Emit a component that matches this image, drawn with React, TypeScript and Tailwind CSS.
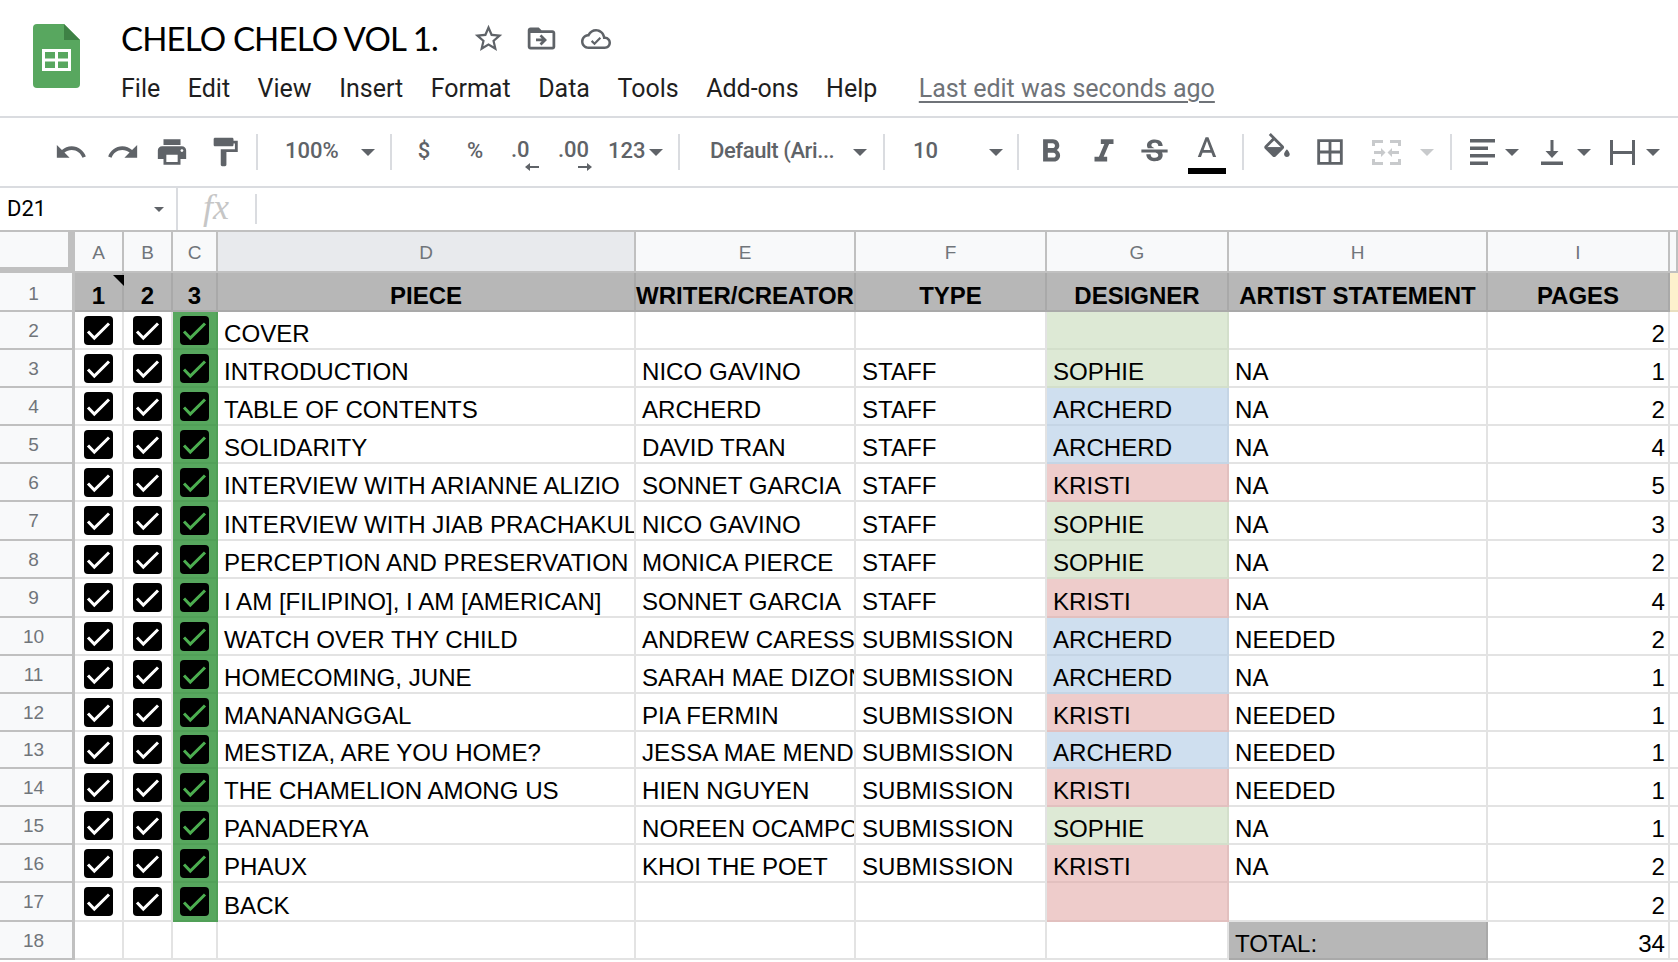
import React from 'react';

const paths = {
  undo: 'M12.5 8c-2.65 0-5.05.99-6.9 2.6L2 7v9h9l-3.62-3.62c1.39-1.16 3.16-1.88 5.12-1.88 3.54 0 6.55 2.31 7.6 5.5l2.37-.78C21.08 11.03 17.15 8 12.5 8z',
  redo: 'M18.4 10.6C16.55 8.99 14.15 8 11.5 8c-4.65 0-8.58 3.03-9.96 7.22L3.9 16c1.05-3.19 4.05-5.5 7.6-5.5 1.95 0 3.73.72 5.12 1.88L13 16h9V7l-3.6 3.6z',
  print: 'M19 8H5c-1.66 0-3 1.34-3 3v6h4v4h12v-4h4v-6c0-1.66-1.34-3-3-3zm-3 11H8v-5h8v5zm3-7c-.55 0-1-.45-1-1s.45-1 1-1 1 .45 1 1-.45 1-1 1zm-1-9H6v4h12V3z',
  paint: 'M18 4V3c0-.55-.45-1-1-1H5c-.55 0-1 .45-1 1v4c0 .55.45 1 1 1h12c.55 0 1-.45 1-1V6h1v4H9v11c0 .55.45 1 1 1h2c.55 0 1-.45 1-1v-9h8V4h-3z',
  bold: 'M15.6 10.79c.97-.67 1.65-1.77 1.65-2.79 0-2.26-1.75-4-4-4H7v14h7.04c2.09 0 3.71-1.7 3.71-3.79 0-1.52-.86-2.82-2.15-3.42zM10 6.5h3c.83 0 1.5.67 1.5 1.5s-.67 1.5-1.5 1.5h-3v-3zm3.5 9H10v-3h3.5c.83 0 1.5.67 1.5 1.5s-.67 1.5-1.5 1.5z',
  italic: 'M10 4v3h2.21l-3.42 8H6v3h8v-3h-2.21l3.42-8H18V4z',
  strike: 'M6.85 7.08C6.85 4.37 9.45 3 12.24 3c1.64 0 3 .49 3.9 1.28.77.65 1.46 1.73 1.46 3.24h-3.01c0-.31-.05-.59-.15-.85-.29-.86-1.2-1.28-2.25-1.28-1.86 0-2.34 1.02-2.34 1.7 0 .48.25.88.74 1.21.38.25.77.48 1.41.7H7.39c-.21-.34-.54-.89-.54-1.92zM21 12v-2H3v2h9.62c1.15.45 1.96.75 1.96 1.97 0 1-.81 1.67-2.28 1.67-1.54 0-2.93-.54-2.93-2.51H6.4c0 .55.08 1.13.24 1.58.81 2.29 3.29 3.3 5.67 3.3 2.27 0 5.3-.89 5.3-4.05 0-.3-.01-1.16-.48-1.96H21z',
  textA: 'M11 3L5.5 17h2.25l1.12-3h6.25l1.12 3h2.25L13 3h-2zm-1.38 9L12 5.67 14.38 12H9.62z',
  fill: 'M16.56 8.94L7.62 0 6.21 1.41l2.38 2.38-5.15 5.15c-.59.59-.59 1.54 0 2.12l5.5 5.5c.29.29.68.44 1.06.44s.77-.15 1.06-.44l5.5-5.5c.59-.58.59-1.53 0-2.12zM5.21 10L10 5.21 14.79 10H5.21zM19 11.5s-2 2.17-2 3.5c0 1.1.9 2 2 2s2-.9 2-2c0-1.33-2-3.5-2-3.5z',
  borders: 'M3 3v18h18V3H3zm8 16H5v-6h6v6zm0-8H5V5h6v6zm8 8h-6v-6h6v6zm0-8h-6V5h6v6z',
  star: 'M22 9.24l-7.19-.62L12 2 9.19 8.63 2 9.24l5.46 4.73L5.82 21 12 17.27 18.18 21l-1.63-7.03L22 9.24zM12 15.4l-3.76 2.27 1-4.28-3.32-2.88 4.38-.38L12 6.1l1.71 4.04 4.38.38-3.32 2.88 1 4.28L12 15.4z',
  folder: 'M20 6h-8l-2-2H4c-1.1 0-2 .9-2 2v12c0 1.1.9 2 2 2h16c1.1 0 2-.9 2-2V8c0-1.1-.9-2-2-2zm0 12H4V8h16v10zm-8.01-9l-1.41 1.41L12.16 12H8v2h4.16l-1.59 1.59L11.99 17 16 13.01 11.99 9z',
  cloud: 'M19.35 10.04C18.67 6.59 15.64 4 12 4 9.11 4 6.6 5.64 5.35 8.04 2.34 8.36 0 10.91 0 14c0 3.31 2.69 6 6 6h13c2.76 0 5-2.24 5-5 0-2.64-2.05-4.78-4.65-4.96zM19 18H6c-2.21 0-4-1.79-4-4 0-2.05 1.53-3.76 3.56-3.97l1.07-.11.5-.95C8.08 7.14 9.94 6 12 6c2.62 0 4.88 1.86 5.39 4.43l.3 1.5 1.53.11c1.56.1 2.78 1.41 2.78 2.96 0 1.65-1.35 3-3 3z',
};

const Icon = ({ d, className }: { d: string; className: string }) => (
  <svg viewBox="0 0 24 24" fill="currentColor" className={`shrink-0 text-[#5f6368] ${className}`}>
    <path d={d} />
  </svg>
);

const Caret = ({ className }: { className: string }) => (
  <svg viewBox="0 0 14 7" fill="currentColor" className={`h-[7px] w-[14px] shrink-0 ${className}`}>
    <path d="M0 0h14L7 7z" />
  </svg>
);

const Divider = ({ className }: { className: string }) => (
  <div className={`h-[36px] w-[2px] shrink-0 bg-[#dadce0] ${className}`} />
);

const Logo = () => (
  <svg viewBox="0 0 47 64" className="h-[64px] w-[47px] shrink-0">
    <path d="M4 0H31L47 16V60a4 4 0 0 1-4 4H4a4 4 0 0 1-4-4V4a4 4 0 0 1 4-4z" fill="#58a75f" />
    <path d="M31 0 47 16H31z" fill="#3e8145" />
    <path d="M9 25h29v22H9z" fill="#fff" />
    <path d="M12 28h10v6.5H12zM25 28h10v6.5H25zM12 37.5h10V44H12zM25 37.5h10V44H25z" fill="#58a75f" />
  </svg>
);

const Checkbox = ({ tick }: { tick: string }) => (
  <div className="flex h-[29px] w-[29px] items-center justify-center rounded-[4px] bg-black">
    <svg viewBox="0 0 29 29" className={`h-[29px] w-[29px] fill-none ${tick}`}>
      <path d="M4 15.5 10.3 22 25 7.5" stroke="currentColor" strokeWidth="3" />
    </svg>
  </div>
);

const menu = ['File', 'Edit', 'View', 'Insert', 'Format', 'Data', 'Tools', 'Add-ons', 'Help'];

type Row = [string, string, string, string, 'g' | 'b' | 'r', string, number];

const rows: Row[] = [
  ['COVER', '', '', '', 'g', '', 2],
  ['INTRODUCTION', 'NICO GAVINO', 'STAFF', 'SOPHIE', 'g', 'NA', 1],
  ['TABLE OF CONTENTS', 'ARCHERD', 'STAFF', 'ARCHERD', 'b', 'NA', 2],
  ['SOLIDARITY', 'DAVID TRAN', 'STAFF', 'ARCHERD', 'b', 'NA', 4],
  ['INTERVIEW WITH ARIANNE ALIZIO', 'SONNET GARCIA', 'STAFF', 'KRISTI', 'r', 'NA', 5],
  ['INTERVIEW WITH JIAB PRACHAKUL', 'NICO GAVINO', 'STAFF', 'SOPHIE', 'g', 'NA', 3],
  ['PERCEPTION AND PRESERVATION', 'MONICA PIERCE', 'STAFF', 'SOPHIE', 'g', 'NA', 2],
  ['I AM [FILIPINO], I AM [AMERICAN]', 'SONNET GARCIA', 'STAFF', 'KRISTI', 'r', 'NA', 4],
  ['WATCH OVER THY CHILD', 'ANDREW CARESS', 'SUBMISSION', 'ARCHERD', 'b', 'NEEDED', 2],
  ['HOMECOMING, JUNE', 'SARAH MAE DIZON', 'SUBMISSION', 'ARCHERD', 'b', 'NA', 1],
  ['MANANANGGAL', 'PIA FERMIN', 'SUBMISSION', 'KRISTI', 'r', 'NEEDED', 1],
  ['MESTIZA, ARE YOU HOME?', 'JESSA MAE MENDOZA', 'SUBMISSION', 'ARCHERD', 'b', 'NEEDED', 1],
  ['THE CHAMELION AMONG US', 'HIEN NGUYEN', 'SUBMISSION', 'KRISTI', 'r', 'NEEDED', 1],
  ['PANADERYA', 'NOREEN OCAMPO', 'SUBMISSION', 'SOPHIE', 'g', 'NA', 1],
  ['PHAUX', 'KHOI THE POET', 'SUBMISSION', 'KRISTI', 'r', 'NA', 2],
  ['BACK', '', '', '', 'r', '', 2],
];

const tint = {
  g: 'bg-[#dde9d5] border-[#d3dfcb]',
  b: 'bg-[#cfdfef] border-[#c5d5e5]',
  r: 'bg-[#eecccb] border-[#e2c0bf]',
};

const RowNum = ({ n, pad = 'pt-[2px]' }: { n: number; pad?: string }) => (
  <div className={`flex items-center justify-center border-r-[3px] border-b-2 border-[#c0c0c0] bg-[#f8f9fa] pr-[5px] text-[19px] text-[#70757a] ${pad}`}>
    {n}
  </div>
);

const ColHead = ({ label, active }: { label: string; active?: boolean }) => (
  <div
    className={`flex items-center justify-center border-r-2 border-b-2 border-[#c0c0c0] pt-[3px] text-[19px] text-[#70757a] ${
      active ? 'bg-[#e8eaed]' : 'bg-[#f8f9fa]'
    }`}
  >
    {label}
  </div>
);

const Title = ({ label, children }: { label: string; children?: React.ReactNode }) => (
  <div className="relative flex items-end justify-center whitespace-nowrap border-r-2 border-b-2 border-[#a9a9a9] bg-[#b7b7b7] pb-[2px] text-[24px] font-bold leading-[24px]">
    {label}
    {children}
  </div>
);

const Cell = ({ children, className = 'bg-white border-[#e3e3e3]' }: { children?: React.ReactNode; className?: string }) => (
  <div className={`flex items-end overflow-hidden whitespace-nowrap border-r-2 border-b-2 pb-[2px] pl-[6px] text-[24.1px] leading-[24px] ${className}`}>
    {children}
  </div>
);

const Check = ({ className, tick }: { className: string; tick: string }) => (
  <div className={`flex items-center justify-center border-r-2 border-b-2 ${className}`}>
    <Checkbox tick={tick} />
  </div>
);

export default function App() {
  return (
    <div className="h-[962px] w-[1678px] overflow-hidden bg-white font-['Liberation_Sans',sans-serif] text-black">
      <div className="flex h-[118px] border-b-2 border-[#dadce0]">
        <div className="ml-[33px] mt-[24px]">
          <Logo />
        </div>
        <div className="ml-[41px] pt-[18px]">
          <div className="flex h-[40px] items-center">
            <span className="w-[316px] whitespace-nowrap font-['Lato',sans-serif] text-[33px] leading-[40px] tracking-[-0.85px]">CHELO CHELO VOL 1.</span>
            <Icon d={paths.star} className="ml-[35px] h-[33px] w-[33px]" />
            <Icon d={paths.folder} className="ml-[20px] h-[33px] w-[33px]" />
            <svg viewBox="0 0 24 24" fill="currentColor" className="ml-[23px] mt-[1px] h-[30px] w-[30px] text-[#5f6368]">
              <path d={paths.cloud} />
              <path d="M8.5 13.5 10.8 15.8 15.5 11" fill="none" stroke="currentColor" strokeWidth="1.7" />
            </svg>
          </div>
          <div className="mt-[11px] flex h-[40px] items-center gap-[27.5px] font-['Roboto',sans-serif] text-[25px] leading-[40px] text-[#1f1f1f]">
            {menu.map((m) => (
              <span key={m}>{m}</span>
            ))}
            <span className="ml-[14px] text-[#6f7378] underline underline-offset-[4px]">Last edit was seconds ago</span>
          </div>
        </div>
      </div>

      <div className="flex h-[70px] items-center border-b-2 border-[#dadce0] pl-[54px] font-['Roboto',sans-serif] text-[22px] font-medium text-[#5f6368]">
        <Icon d={paths.undo} className="h-[34px] w-[34px]" />
        <Icon d={paths.redo} className="ml-[18px] h-[34px] w-[34px]" />
        <Icon d={paths.print} className="ml-[15px] h-[34px] w-[34px]" />
        <Icon d={paths.paint} className="ml-[19px] h-[34px] w-[34px]" />
        <Divider className="ml-[14px]" />
        <span className="ml-[27px] w-[52px] whitespace-nowrap pb-[3px]">100%</span>
        <Caret className="ml-[24px]" />
        <Divider className="ml-[15px]" />
        <span className="ml-[15px] w-[34px] pb-[3px] text-center">$</span>
        <span className="ml-[17px] w-[34px] pb-[3px] text-center">%</span>
        <div className="ml-[19px] flex w-[28px] flex-col pt-[6px]">
          <span className="leading-[22px]">.0</span>
          <svg viewBox="0 0 14 8" fill="currentColor" className="mt-[2px] h-[8px] w-[14px] self-end">
            <path d="M0 4 5 0v3h9v2H5v3z" />
          </svg>
        </div>
        <div className="ml-[19px] flex w-[34px] flex-col pt-[6px]">
          <span className="leading-[22px]">.00</span>
          <svg viewBox="0 0 14 8" fill="currentColor" className="ml-[20px] mt-[2px] h-[8px] w-[14px]">
            <path d="M14 4 9 0v3H0v2h9v3z" />
          </svg>
        </div>
        <span className="ml-[16px] w-[36px] pb-[3px]">123</span>
        <Caret className="ml-[5px]" />
        <Divider className="ml-[15px]" />
        <span className="ml-[30px] w-[125px] whitespace-nowrap pb-[3px] tracking-[-0.4px]">Default (Ari...</span>
        <Caret className="ml-[18px]" />
        <Divider className="ml-[16px]" />
        <span className="ml-[28px] w-[23px] pb-[3px]">10</span>
        <Caret className="ml-[53px]" />
        <Divider className="ml-[14px]" />
        <Icon d={paths.bold} className="ml-[13px] h-[38px] w-[38px]" />
        <Icon d={paths.italic} className="ml-[15px] h-[38px] w-[38px]" />
        <Icon d={paths.strike} className="ml-[14px] h-[35px] w-[35px]" />
        <div className="ml-[16px] flex w-[38px] flex-col items-center self-start pt-[15px]">
          <Icon d={paths.textA} className="h-[34px] w-[34px]" />
          <div className="mt-[1px] h-[6px] w-[38px] bg-black" />
        </div>
        <Divider className="ml-[16px]" />
        <svg viewBox="0 0 24 24" fill="currentColor" className="ml-[16px] h-[34px] w-[34px] shrink-0 -translate-y-[2px]">
          <path d={paths.fill} />
          <path d="M5.21 10h9.58L10 14.79z" />
        </svg>
        <Icon d={paths.borders} className="ml-[19px] h-[34px] w-[34px]" />
        <svg viewBox="0 0 29 25" fill="currentColor" className="ml-[25px] h-[25px] w-[29px] shrink-0 text-[#c8cacc]">
          <path d="M0 0h11v3H3v3H0zM18 0h11v6h-3V3h-8zM0 19h3v3h8v3H0zM26 19h3v6H18v-3h8zM2 11h7V8l4.5 4.5L9 17v-3H2zM27 11h-7V8l-4.5 4.5L20 17v-3h7z" />
        </svg>
        <Caret className="ml-[19px] text-[#c8cacc]" />
        <Divider className="ml-[16px]" />
        <svg viewBox="0 0 25 26" fill="currentColor" className="ml-[18px] h-[26px] w-[25px] shrink-0">
          <path d="M0 0h25v3.5H0zM0 7.5h18V11H0zM0 15h25v3.5H0zM0 22.5h18V26H0z" />
        </svg>
        <Caret className="ml-[10px]" />
        <svg viewBox="0 0 22 25" fill="currentColor" className="ml-[22px] h-[25px] w-[22px] shrink-0">
          <path d="M0 21.5h22V25H0zM9.5 0h3v11h5L11 18 4.5 11h5z" />
        </svg>
        <Caret className="ml-[14px]" />
        <svg viewBox="0 0 25 25" fill="currentColor" className="ml-[19px] h-[25px] w-[25px] shrink-0">
          <path d="M0 0h3v25H0zM22 0h3v25h-3zM3 11h19v3H3z" />
        </svg>
        <Caret className="ml-[11px]" />
      </div>

      <div className="flex h-[42px] items-center font-['Roboto',sans-serif]">
        <span className="ml-[7px] w-[145px] pb-[2px] text-[22px]">D21</span>
        <svg viewBox="0 0 10 5" fill="currentColor" className="ml-[2px] h-[5px] w-[10px] text-[#5f6368]">
          <path d="M0 0h10L5 5z" />
        </svg>
        <div className="ml-[12px] h-[42px] w-[2px] bg-[#dadce0]" />
        <span className="ml-[25px] w-[52px] pb-[4px] font-['Liberation_Serif',serif] text-[36px] italic leading-[38px] text-[#c6c6c6]">fx</span>
        <div className="h-[30px] w-[2px] bg-[#dadce0]" />
      </div>

      <div className="grid grid-cols-[75px_49px_49px_45px_418px_220px_191px_182px_259px_182px_8px] grid-rows-[41px_39px_38px_38px_38px_38px_38px_39px_38px_39px_38px_38px_38px_37px_38px_38px_38px_39px_38px] border-t-2 border-[#c0c0c0]">
        <div className="border-r-[7px] border-b-[6px] border-[#c0c0c0] bg-[#f8f9fa]" />
        {['A', 'B', 'C', 'D', 'E', 'F', 'G', 'H', 'I', ''].map((c) => (
          <ColHead key={c} label={c} active={c === 'D'} />
        ))}

        <RowNum n={1} pad="pt-[5px]" />
        <Title label="1">
          <svg viewBox="0 0 11 11" className="absolute right-[-2px] top-[2px] h-[11px] w-[11px]">
            <path d="M0 0h11v11z" />
          </svg>
        </Title>
        <Title label="2" />
        <Title label="3" />
        <Title label="PIECE" />
        <Title label="WRITER/CREATOR" />
        <Title label="TYPE" />
        <Title label="DESIGNER" />
        <Title label="ARTIST STATEMENT" />
        <Title label="PAGES" />
        <div className="border-b-2 border-[#e9dfc0] bg-[#fdf1cd]" />

        {rows.map((r, i) => (
          <React.Fragment key={i}>
            <RowNum n={i + 2} />
            <Check className="border-[#e3e3e3] bg-white" tick="text-white" />
            <Check className="border-[#e3e3e3] bg-white" tick="text-white" />
            <Check className="border-[#51a058] bg-[#57a75e]" tick="text-[#4cae50]" />
            <Cell>{r[0]}</Cell>
            <Cell>{r[1]}</Cell>
            <Cell>{r[2]}</Cell>
            <Cell className={tint[r[4]]}>{r[3]}</Cell>
            <Cell>{r[5]}</Cell>
            <Cell className="justify-end border-[#e3e3e3] bg-white pr-[3px]">{r[6]}</Cell>
            <div className="border-b-2 border-[#e3e3e3]" />
          </React.Fragment>
        ))}

        <RowNum n={18} />
        <Cell />
        <Cell />
        <Cell />
        <Cell />
        <Cell />
        <Cell />
        <Cell />
        <Cell className="border-[#a9a9a9] bg-[#b7b7b7]">TOTAL:</Cell>
        <Cell className="justify-end border-[#e3e3e3] bg-white pr-[3px]">34</Cell>
        <div className="border-b-2 border-[#e3e3e3]" />
      </div>
    </div>
  );
}
